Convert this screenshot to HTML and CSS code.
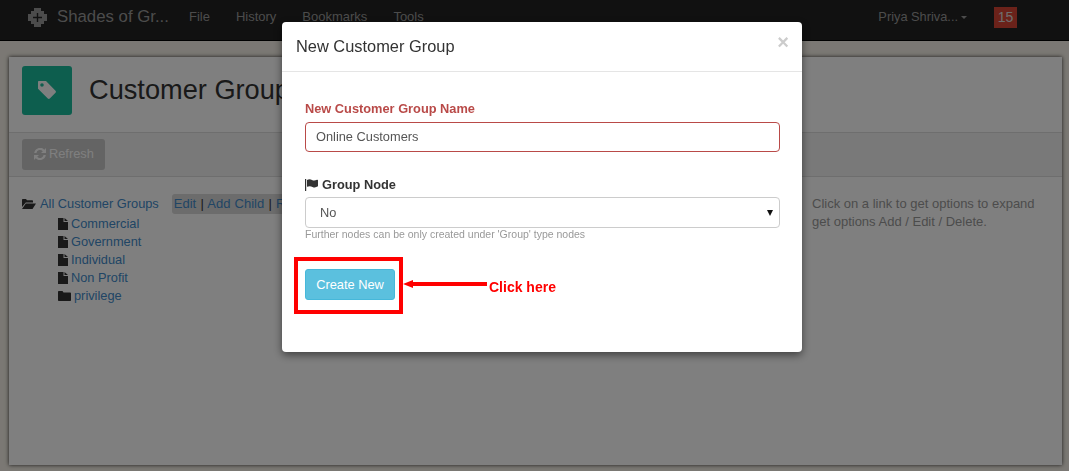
FILE: index.html
```html
<!DOCTYPE html>
<html lang="en">
<head>
<meta charset="utf-8">
<title>Customer Groups</title>
<link rel="stylesheet" href="styles.css">
</head>
<body>
<header class="navbar">
  <svg class="brand-icon" viewBox="0 0 19 19"><path d="M6 0h7v3h3v3h3v7h-3v3h-3v3H6v-3H3v-3H0V6h3V3h3zM8.800 5v3.800H5v1.400h3.800V14h1.400v-3.800H14V8.800h-3.800V5z" fill-rule="evenodd"/></svg>
  <span class="brand">Shades of Gr...</span>
  <nav class="nav">
    <a>File</a><a>History</a><a>Bookmarks</a><a>Tools</a>
  </nav>
  <div class="nav-right">
    <span class="user">Priya Shriva...<i class="caret"></i></span>
    <span class="badge">15</span>
  </div>
</header>
<main class="page">
  <section class="panel">
    <div class="panel-head">
      <div class="head-icon">
        <svg viewBox="0 0 20 20"><path d="M1 1.800C1 1.300 1.300 1 1.800 1H9l9.500 9.800c.6.600.6 1.400 0 2L12.800 18.500c-.6.600-1.400.6-2 0L1 8.800zM5 3.200a1.800 1.800 0 1 0 0 3.600 1.800 1.800 0 0 0 0-3.600z" fill-rule="evenodd"/></svg>
      </div>
      <h1>Customer Groups</h1>
    </div>
    <div class="toolbar">
      <button class="btn-refresh" type="button">
        <svg viewBox="0 0 12 12"><path d="M12 0v5H7l1.800-1.800A3.700 3.700 0 0 0 2.400 5H.2A5.900 5.900 0 0 1 10.300 1.700zM0 12V7h5L3.200 8.800A3.700 3.700 0 0 0 9.600 7h2.200A5.900 5.900 0 0 1 1.700 10.300z"/></svg>
        Refresh
      </button>
    </div>
    <div class="panel-body">
      <div class="tree">
        <div class="tree-root">
          <svg class="ic-open" viewBox="0 0 14 10"><path d="M0 1c0-.6.400-1 1-1h3l1 1.200h5c.6 0 1 .4 1 1V3.500H3.800L0 8zM3.800 4.500H14L10.500 10H0z"/></svg>
          <a class="link">All Customer Groups</a>
          <span class="actions"><a class="link">Edit</a> | <a class="link">Add Child</a> | <a class="link">Rename</a></span>
        </div>
        <ul class="tree-list">
          <li><svg class="ic-file" viewBox="0 0 10 12"><path d="M0 0h5.500v4H10v8H0zM6.500 0 10 3H6.500z"/></svg><a class="link">Commercial</a></li>
          <li><svg class="ic-file" viewBox="0 0 10 12"><path d="M0 0h5.500v4H10v8H0zM6.500 0 10 3H6.500z"/></svg><a class="link">Government</a></li>
          <li><svg class="ic-file" viewBox="0 0 10 12"><path d="M0 0h5.500v4H10v8H0zM6.500 0 10 3H6.500z"/></svg><a class="link">Individual</a></li>
          <li><svg class="ic-file" viewBox="0 0 10 12"><path d="M0 0h5.500v4H10v8H0zM6.500 0 10 3H6.500z"/></svg><a class="link">Non Profit</a></li>
          <li><svg class="ic-folder" viewBox="0 0 13 10"><path d="M0 1c0-.6.400-1 1-1h3.500l1 1.500H12c.6 0 1 .4 1 1V9c0 .6-.4 1-1 1H1c-.6 0-1-.4-1-1z"/></svg><a class="link">privilege</a></li>
        </ul>
      </div>
      <p class="hint">Click on a link to get options to expand get options Add / Edit / Delete.</p>
    </div>
  </section>
</main>
<div class="backdrop"></div>
<div class="modal">
  <div class="modal-head">
    <h2>New Customer Group</h2>
    <span class="close">×</span>
  </div>
  <form class="modal-body">
    <label class="label label-error" for="name">New Customer Group Name</label>
    <input class="field field-error" id="name" type="text" value="Online Customers">
    <label class="label label-node" for="node">
      <svg class="ic-flag" viewBox="0 0 13 12"><path d="M0 0h1.200v12H0zM2 1c2-1 3.500-.8 5 0s3 .8 5-.2c.6-.2 1 0 1 .5v6c-2 1.300-3.800 1.500-5.500.6S4 6.800 2 7.800z"/></svg>
      Group Node
    </label>
    <div class="select" id="node"><span>No</span><i class="select-arrow"></i></div>
    <p class="help">Further nodes can be only created under 'Group' type nodes</p>
    <div class="actions-row">
      <button class="btn-create" type="button">Create New</button>
      <div class="callout-box"></div>
      <div class="callout-arrow"></div>
      <span class="callout-text">Click here</span>
    </div>
  </form>
</div>
</body>
</html>
```

FILE: styles.css
```css
* { box-sizing: border-box; }
html, body { height: 100%; }
body {
  margin: 0;
  overflow: hidden;
  background: #f6f1e8;
  color: #333;
  font: 12.8px/18px "Liberation Sans", Arial, sans-serif;
}
.navbar {
  display: flex;
  align-items: center;
  height: 40px;
  padding: 0 52px 6px 28px;
  background: #222;
  box-shadow: 0 1px 0 #000;
  color: #999;
}
.brand-icon { width: 19px; height: 19px; fill: #999; }
.brand { margin-left: 10px; font-size: 16.8px; white-space: nowrap; }
.nav { display: flex; margin-left: 7px; font-size: 13px; }
.nav a { padding: 0 13px; }
.nav-right { display: flex; align-items: center; margin-left: auto; }
.caret {
  display: inline-block;
  margin-left: 3px;
  vertical-align: middle;
  border-top: 3px solid #999;
  border-left: 3px solid transparent;
  border-right: 3px solid transparent;
}
.badge {
  display: flex;
  align-items: center;
  justify-content: center;
  width: 23px;
  height: 21px;
  margin-left: 27px;
  background: #d64535;
  color: #ddd;
  font-size: 14px;
}
.page { padding: 17px 7px 6px 9px; height: 431px; }
.panel {
  height: 100%;
  background: #fff;
  box-shadow: 0 0 4px rgba(0, 0, 0, .8);
}
.panel-head {
  display: flex;
  align-items: center;
  height: 76px;
  padding: 0 13px 8px;
  border-bottom: 1px solid #ddd;
}
.head-icon {
  display: flex;
  align-items: center;
  justify-content: center;
  width: 50px;
  height: 49px;
  border-radius: 3px;
  background: #1abc9c;
}
.head-icon svg { width: 20px; height: 20px; fill: #fff; margin-bottom: 2px; }
.panel-head h1 {
  margin: 0 0 2px 17px;
  font-size: 27.2px;
  font-weight: 400;
  line-height: 1.1;
  color: #333;
}
.toolbar {
  height: 44px;
  padding: 6px 13px;
  background: #f2f2f2;
  border-bottom: 1px solid #ddd;
}
.btn-refresh {
  display: inline-flex;
  align-items: center;
  width: 83px;
  height: 31px;
  padding: 0 0 2px 12px;
  border: 0;
  border-radius: 3px;
  background: #c8c8c8;
  color: #fff;
  font: 12.8px "Liberation Sans", Arial, sans-serif;
}
.btn-refresh svg { width: 12px; height: 12px; margin-right: 3px; fill: #fff; }
.panel-body {
  display: flex;
  justify-content: space-between;
  padding: 18px 14px 0 13px;
}
.link { color: #428bca; }
.tree-root { display: flex; align-items: center; height: 18px; white-space: nowrap; }
.ic-open { width: 14px; height: 10px; margin-right: 4px; fill: #333; }
.actions {
  margin-left: 14px;
  padding: 0 1px;
  font-size: 13px;
  word-spacing: .6px;
  background: #d8d8d8;
  border-radius: 2px;
  box-shadow: 0 0 0 1px #d8d8d8;
}
.tree-list { margin: 2px 0 0; padding: 0 0 0 36px; list-style: none; }
.tree-list li { display: flex; align-items: center; height: 18px; }
.ic-file { width: 10px; height: 12px; margin-right: 3px; fill: #333; }
.ic-folder { width: 13px; height: 10px; margin-right: 3px; fill: #333; }
.hint { margin: 0; width: 236px; font-size: 13px; color: #999; }
.backdrop {
  position: fixed;
  inset: 0;
  background: rgba(0, 0, 0, .5);
}
.modal {
  position: fixed;
  top: 22px;
  left: 282px;
  width: 520px;
  height: 330px;
  background: #fff;
  border-radius: 4px;
  box-shadow: 0 3px 9px rgba(0, 0, 0, .5);
}
.modal-head {
  display: flex;
  align-items: center;
  justify-content: space-between;
  height: 50px;
  padding: 0 13px 0 14px;
  border-bottom: 1px solid #e5e5e5;
}
.modal-head h2 { margin: 0 0 2px; font-size: 16.4px; font-weight: 400; color: #333; }
.close { margin-top: -9px; font-size: 20px; font-weight: 700; color: #ccc; line-height: 20px; }
.modal-body { padding: 28px 22px 0 23px; }
.label { display: block; font-weight: 700; color: #333; }
.label-error { color: #b94a48; }
.field {
  display: block;
  width: 100%;
  height: 30px;
  margin-top: 4px;
  padding: 0 10px 2px;
  border: 1px solid #ccc;
  border-radius: 4px;
  color: #555;
  font: 12.8px "Liberation Sans", Arial, sans-serif;
  outline: 0;
}
.field-error { border-color: #b94a48; }
.label-node { display: flex; align-items: center; margin-top: 24px; }
.ic-flag { width: 13px; height: 12px; margin-right: 4px; fill: #333; }
.select {
  display: flex;
  align-items: center;
  justify-content: space-between;
  height: 31px;
  margin-top: 3px;
  padding: 0 6px 0 14px;
  border: 1px solid #ccc;
  border-radius: 4px;
  color: #555;
}
.select-arrow {
  border-top: 6px solid #111;
  border-left: 3.5px solid transparent;
  border-right: 3.5px solid transparent;
}
.help { margin: 0; font-size: 10.5px; line-height: 13px; color: #999; }
.actions-row { position: relative; margin-top: 28px; height: 31px; }
.btn-create {
  width: 90px;
  height: 31px;
  padding: 0 0 1px;
  border: 1px solid #46b8da;
  border-radius: 3px;
  background: #5bc0de;
  color: #fff;
  font: 12.8px "Liberation Sans", Arial, sans-serif;
}
.callout-box {
  position: absolute;
  left: -11px;
  top: -12px;
  width: 109px;
  height: 57px;
  border: 4px solid #f00;
}
.callout-arrow {
  position: absolute;
  left: 108px;
  top: 13px;
  width: 74px;
  height: 4px;
  background: #f00;
}
.callout-arrow::before {
  content: "";
  position: absolute;
  left: -10px;
  top: -2px;
  border-top: 4px solid transparent;
  border-bottom: 4px solid transparent;
  border-right: 10px solid #f00;
}
.callout-text {
  position: absolute;
  left: 184px;
  top: 9px;
  color: #f00;
  font-size: 14px;
  font-weight: 700;
  white-space: nowrap;
}
```
